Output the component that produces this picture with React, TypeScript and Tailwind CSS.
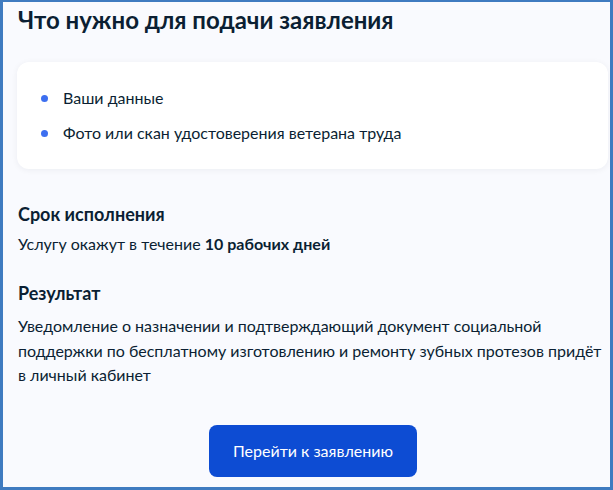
export default function App() {
  const items = ["Ваши данные", "Фото или скан удостоверения ветерана труда"];

  return (
    <div className="h-[490px] w-[613px] overflow-hidden border-x-[3px] border-t-2 border-b-[3px] border-[#3f7bc0] bg-[#f9fafe] font-['Lato','Noto_Sans',sans-serif] text-[#0b1f33]">
      <div className="flex flex-col pl-[15px] pr-[2px] pt-[2px]">
        <h2 className="text-[24px] font-bold leading-8">Что нужно для подачи заявления</h2>

        <div className="-ml-px mt-[26px] flex flex-col gap-[11px] rounded-xl bg-white py-6 pl-[24px] shadow-[0_1px_6px_rgba(11,31,51,0.06)]">
          {items.map((item) => (
            <div key={item} className="flex items-center gap-[15px] text-[16px] leading-6">
              <span className="h-[7px] w-[7px] shrink-0 rounded-full bg-[#3d6ff0]" />
              <span>{item}</span>
            </div>
          ))}
        </div>

        <h3 className="mt-[33px] text-[18px] font-bold leading-6">Срок исполнения</h3>
        <p className="mt-[6px] text-[16px] leading-6">
          Услугу окажут в течение <span className="font-bold">10 рабочих дней</span>
        </p>

        <h3 className="mt-[25px] text-[18px] font-bold leading-6">Результат</h3>
        <p className="mt-[9px] text-[16px] leading-[24.5px]">
          Уведомление о назначении и подтверждающий документ социальной поддержки по бесплатному
          изготовлению и ремонту зубных протезов придёт в личный кабинет
        </p>

        <div className="mt-[37px] flex justify-center">
          <button
            type="button"
            className="h-[52px] w-[208px] rounded-lg bg-[#0d4cd3] text-[16px] text-white"
          >
            Перейти к заявлению
          </button>
        </div>
      </div>
    </div>
  );
}
